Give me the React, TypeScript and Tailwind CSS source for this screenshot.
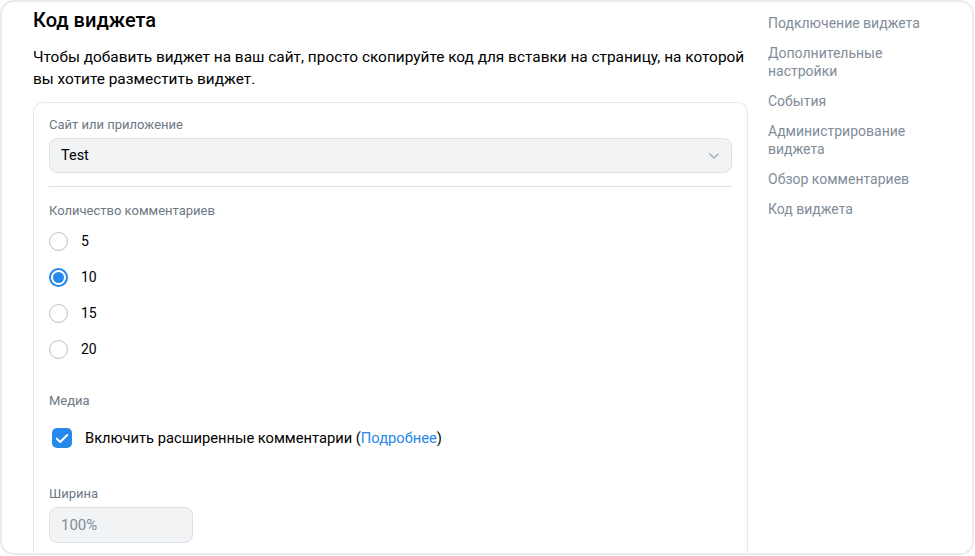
import React, { useState } from 'react';

const navItems = [
  'Подключение виджета',
  'Дополнительные настройки',
  'События',
  'Администрирование виджета',
  'Обзор комментариев',
  'Код виджета',
];

const counts = ['5', '10', '15', '20'];

const Radio: React.FC<{ checked: boolean; label: string; onClick: () => void }> = ({ checked, label, onClick }) => (
  <div className="flex h-[36px] cursor-pointer items-center" onClick={onClick}>
    {checked ? (
      <span className="flex h-[19px] w-[19px] items-center justify-center rounded-full border-2 border-[#2688eb]">
        <span className="h-[11px] w-[11px] rounded-full bg-[#2688eb]" />
      </span>
    ) : (
      <span className="h-[19px] w-[19px] rounded-full border-[1.5px] border-[#b8c1cc]" />
    )}
    <span className="ml-[13px] text-[14px] text-[#000]">{label}</span>
  </div>
);

const App: React.FC = () => {
  const [count, setCount] = useState('10');
  const [extended, setExtended] = useState(true);

  return (
    <div className="h-[556px] w-[975px] bg-white font-['Roboto',sans-serif]">
      <div className="flex h-[555px] w-[974px] overflow-hidden rounded-[14px] border-[2.5px] border-[#ebebeb] bg-white">
        {/* main column */}
        <div className="ml-[31px] w-[715px] shrink-0 pt-[5px]">
          <h2 className="text-[20px] leading-[26px] font-medium text-[#000]">Код виджета</h2>
          <p className="mt-[13px] text-[15.4px] leading-[22px] text-[#000]">
            Чтобы добавить виджет на ваш сайт, просто скопируйте код для вставки на страницу, на которой вы хотите
            разместить виджет.
          </p>

          <div className="mt-[12px] rounded-t-[10px] border border-b-0 border-[#e7e8ec] px-[15px] pt-[14px] pb-[20px]">
            <div className="text-[13px] leading-[16px] text-[#6d7885]">Сайт или приложение</div>
            <div className="mt-[5px] flex h-[35px] items-center justify-between rounded-[8px] border border-[#dce1e6] bg-[#f2f3f5] pr-[11px] pl-[11px]">
              <span className="text-[14.5px] text-[#000]">Test</span>
              <svg width="12" height="8" viewBox="0 0 12 8" fill="none">
                <path d="M1.8 2 6 6l4.2-4" stroke="#a3adb8" strokeWidth="1.5" strokeLinecap="round" strokeLinejoin="round" />
              </svg>
            </div>

            <div className="mt-[13px] h-px bg-[#dce1e6]" />

            <div className="mt-[16px] text-[13px] leading-[16px] text-[#6d7885]">Количество комментариев</div>
            <div className="mt-[4px]">
              {counts.map((c) => (
                <Radio key={c} label={c} checked={count === c} onClick={() => setCount(c)} />
              ))}
            </div>

            <div className="mt-[26px] text-[13px] leading-[16px] text-[#6d7885]">Медиа</div>
            <div className="mt-[18px] flex cursor-pointer items-center pl-[3px]" onClick={() => setExtended(!extended)}>
              <span
                className={
                  extended
                    ? 'flex h-[20px] w-[20px] items-center justify-center rounded-[5px] bg-[#2688eb]'
                    : 'h-[20px] w-[20px] rounded-[5px] border-[1.5px] border-[#b8c1cc]'
                }
              >
                {extended && (
                  <svg width="14" height="11" viewBox="0 0 14 11" fill="none">
                    <path d="M1.8 5.6 5.2 9 12.2 2" stroke="#fff" strokeWidth="2" strokeLinecap="round" strokeLinejoin="round" />
                  </svg>
                )}
              </span>
              <span className="ml-[13px] text-[14.7px] text-[#000]">
                Включить расширенные комментарии (<span className="text-[#2688eb]">Подробнее</span>)
              </span>
            </div>

            <div className="mt-[37px] text-[13px] leading-[16px] text-[#6d7885]">Ширина</div>
            <div className="mt-[5px] flex h-[36px] w-[144px] items-center rounded-[8px] border border-[#dce1e6] bg-[#f2f3f5] pl-[11px]">
              <span className="text-[15px] text-[#818c99]">100%</span>
            </div>
          </div>
        </div>

        {/* side navigation */}
        <nav className="ml-[20px] w-[180px] pt-[12px]">
          <ul className="flex flex-col gap-[12px]">
            {navItems.map((item) => (
              <li key={item} className="cursor-pointer text-[14px] leading-[18px] text-[#818c99]">
                {item}
              </li>
            ))}
          </ul>
        </nav>
      </div>
    </div>
  );
};

export default App;
